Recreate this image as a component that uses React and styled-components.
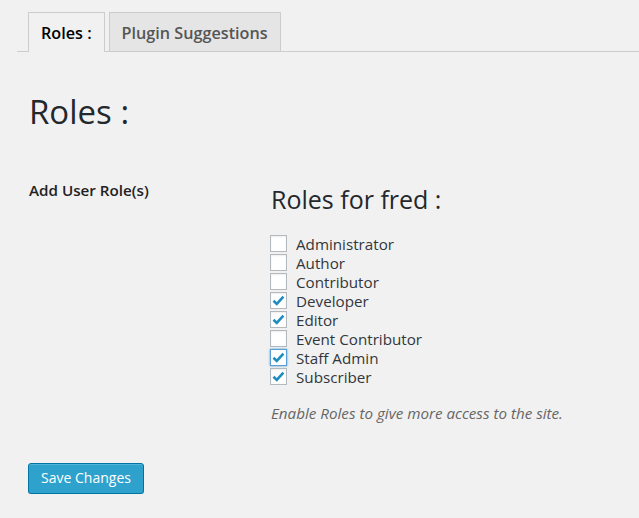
import styled, { createGlobalStyle } from 'styled-components'

const Global = createGlobalStyle`
  html, body { margin: 0; background: #f1f1f1; }
  body { font-family: "Open Sans", "Liberation Sans", sans-serif; color: #23282d; }
`

const Wrap = styled.div`padding: 12px 0 0 17px;`

const TabBar = styled.div`
  display: flex; gap: 4px; padding-left: 11px;
  border-bottom: 1px solid #ccc;
`
const Tab = styled.div`
  box-sizing: border-box; padding: 1px 12px 0;
  display: flex; align-items: center;
  font-size: 16.2px; font-weight: 600;
  border: 1px solid #ccc; border-bottom: none;
  margin-bottom: ${p => (p.$active ? '-1px' : '0')};
  height: ${p => (p.$active ? '40px' : '39px')};
  background: ${p => (p.$active ? '#f1f1f1' : '#e5e5e5')};
  color: ${p => (p.$active ? '#000' : '#555')};
`

const Content = styled.div`padding: 0 0 0 11px;`

const Title = styled.h1`
  margin: 38px 0 0 1px; font-size: 33px; font-weight: 400; line-height: 44px; color: #23282d;
`

const FormGrid = styled.div`
  display: grid; grid-template-columns: 242px 1fr; margin: 46px 0 0 1px;
`
const Label = styled.div`font-size: 15.2px; font-weight: 600; line-height: 20px; color: #222;`

const SubTitle = styled.h2`
  margin: 3px 0 19px; font-size: 25px; font-weight: 400; line-height: 32px; color: #23282d;
`

const List = styled.div`display: flex; flex-direction: column;`
const Item = styled.label`
  display: flex; align-items: center; height: 19px; font-size: 15.2px; color: #32373c;
`
const Box = styled.span`
  width: 17px; height: 17px; box-sizing: border-box; margin: 0 9px 0 -1px;
  background: #fff; display: flex; align-items: center; justify-content: center;
  border: 1px solid ${p => (p.$focus ? '#5b9dd9' : '#b4b9be')};
  box-shadow: ${p => (p.$focus ? '0 0 2px rgba(30,140,190,.8)' : 'inset 0 1px 2px rgba(0,0,0,.07)')};
`

const Desc = styled.p`
  margin: 17px 0 0; font-size: 15.2px; font-style: italic; color: #666; line-height: 20px;
`

const Button = styled.button`
  margin-top: 40px; height: 31px; width: 116px; padding: 0 0 2px; box-sizing: border-box;
  font-family: inherit; font-size: 14px; color: #fff;
  background: #2ea2cc; border: 1px solid #0074a2; border-radius: 3px;
  box-shadow: inset 0 1px 0 rgba(120,200,230,.5), 0 1px 0 rgba(0,0,0,.15);
`

const Check = () => (
  <svg width="15" height="15" viewBox="0 0 14 14">
    <path d="M2.3 7.2 L5.4 10.2 L11.6 3.4" fill="none" stroke="#1e8cbe" strokeWidth="2.4" />
  </svg>
)

const roles = [
  ['Administrator', false],
  ['Author', false],
  ['Contributor', false],
  ['Developer', true],
  ['Editor', true],
  ['Event Contributor', false],
  ['Staff Admin', true, true],
  ['Subscriber', true],
]

export default function App() {
  return (
    <Wrap>
      <Global />
      <TabBar>
        <Tab $active>Roles :</Tab>
        <Tab>Plugin Suggestions</Tab>
      </TabBar>
      <Content>
        <Title>Roles :</Title>
        <FormGrid>
          <Label>Add User Role(s)</Label>
          <div>
            <SubTitle>Roles for fred :</SubTitle>
            <List>
              {roles.map(([name, on, focus]) => (
                <Item key={name}>
                  <Box $focus={focus}>{on && <Check />}</Box>
                  {name}
                </Item>
              ))}
            </List>
            <Desc>Enable Roles to give more access to the site.</Desc>
          </div>
        </FormGrid>
        <Button>Save Changes</Button>
      </Content>
    </Wrap>
  )
}
